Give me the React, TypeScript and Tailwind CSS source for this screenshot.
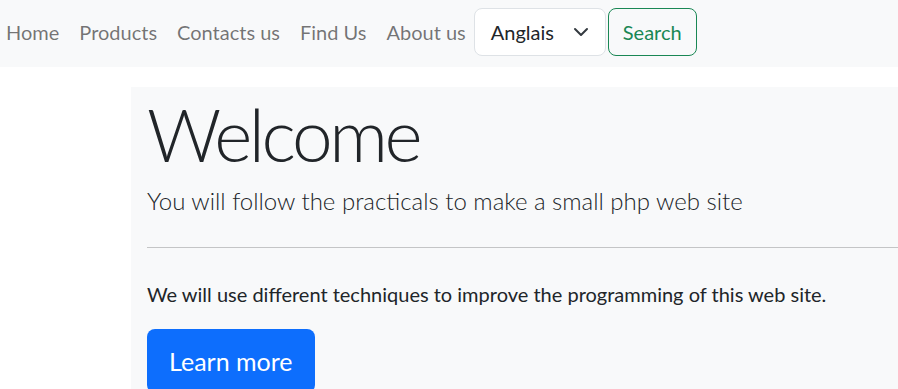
import React from 'react';

const links = ['Home', 'Products', 'Contacts us', 'Find Us', 'About us'];

export default function App() {
  return (
    <div className="min-h-screen bg-white font-['Lato',sans-serif] text-[#212529] overflow-hidden">
      <nav className="h-[67px] bg-[#f8f9fa] flex items-start pt-2 pl-[6px]">
        <ul className="flex items-center h-12 gap-5 text-[20px] text-black/55">
          {links.map(l => (
            <li key={l}>
              <a href="#" className="leading-[30px]">{l}</a>
            </li>
          ))}
        </ul>
        <div className="flex ml-2">
          <div className="w-[132px] h-12 bg-white border border-[#dee2e6] rounded-lg flex items-center justify-between pl-4 pr-4 text-[20px]">
            <span>Anglais</span>
            <svg width="16" height="16" viewBox="0 0 16 16" fill="none" stroke="#343a40" strokeWidth="2" strokeLinecap="round" strokeLinejoin="round">
              <path d="m2 5 6 6 6-6" />
            </svg>
          </div>
          <button className="ml-[2px] h-12 px-[14px] border border-[#198754] text-[#198754] rounded-lg text-[20px]">
            Search
          </button>
        </div>
      </nav>

      <div className="flex mt-5">
        <div className="w-[131px] shrink-0" />
        <div className="flex-1 bg-[#f8f9fa] pl-4 pt-1 pb-8">
          <h1 className="text-[73px] font-light leading-[1.2] tracking-[-3.4px]">Welcome</h1>
          <p className="text-[24px] font-light mt-1">You will follow the practicals to make a small php web site</p>
          <hr className="mt-[28px] mb-6 border-t border-[#c4c5c6]" />
          <p className="text-[20px] mt-[31px]">We will use different techniques to improve the programming of this web site.</p>
          <button className="mt-5 bg-[#0d6efd] text-white text-[25px] px-[22px] py-[14px] leading-9 rounded-lg">
            Learn more
          </button>
        </div>
      </div>
    </div>
  );
}
